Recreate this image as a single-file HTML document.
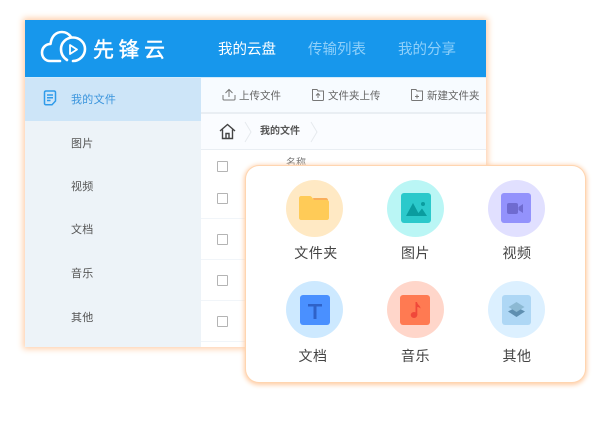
<!DOCTYPE html>
<html lang="zh">
<head>
<meta charset="utf-8">
<style>
html,body{margin:0;padding:0;background:#fff}
body{width:600px;height:434px;position:relative;overflow:hidden;font-family:"Liberation Sans","Noto Sans CJK SC",sans-serif;color:#444}
div,span,svg{position:absolute}
#w{left:0;top:0;width:600px;height:434px;filter:blur(.3px)}
.t{white-space:nowrap;line-height:1}
#p{left:25px;top:20px;width:461px;height:327px;background:#fff;box-shadow:0 0 6px 2px #ffd0ab}
.side{font-size:11px;letter-spacing:.3px;color:#555;left:71px}
.tool{font-size:10.5px;color:#666;top:91px}
.nav{font-size:14.5px;top:43px;color:#8fd0fa}
.cb{left:217px;width:9px;height:9px;border:1px solid #b4b4b4;border-radius:1px;background:#fff}
.ln{left:201px;width:285px;height:1px;background:#f1f5f9}
.c{width:57px;height:57px;border-radius:50%}
.s{width:30px;height:30px;border-radius:3px}
.lb{font-size:14px;letter-spacing:.5px;color:#444;text-align:center;width:60px}
</style>
</head>
<body>
<div id="w">
<div id="p"></div>
<div style="left:25px;top:20px;width:461px;height:57px;background:#1797ec"></div>
<div style="left:25px;top:77px;width:461px;height:1px;background:#d3ebfb"></div>

<svg style="left:40px;top:29px" width="48" height="36" viewBox="0 0 48 36" fill="none" stroke="#fff" stroke-width="2.6" stroke-linecap="round" stroke-linejoin="round">
<path d="M20 32H10C5 32 2 28 2 23.500C2 18.500 6 15 10.500 15C11.500 7 16 3 22 3C26 3 29 5 31 8"/>
<path d="M27 31C22.500 28 21 24 21 20C21 13.500 26.500 8.500 33 8.500C39.500 8.500 45 13.500 45 20C45 26.500 39.500 32 33 32"/>
<path d="M30 16L37 20.500L30 25Z" stroke-width="1.800"/>
</svg>
<span class="t" style="left:93px;top:40px;font-size:21px;letter-spacing:4.500px;color:#fff;-webkit-text-stroke:.4px #fff">先锋云</span>
<span class="t nav" style="left:218px;color:#fff">我的云盘</span>
<span class="t nav" style="left:308px">传输列表</span>
<span class="t nav" style="left:398px">我的分享</span>

<div style="left:25px;top:78px;width:176px;height:269px;background:#edf3f8"></div>
<div style="left:25px;top:78px;width:176px;height:43px;background:#cde5f8"></div>
<svg style="left:43px;top:90px" width="14" height="16" viewBox="0 0 14 16" fill="none" stroke="#2f9bea" stroke-width="1.500">
<path d="M3 1H11C12 1 12.500 1.500 12.500 2.500V11L9 14.800H3C2 14.800 1.500 14 1.500 13.500V2.500C1.500 1.500 2 1 3 1Z"/>
<path d="M4 5H10M4 7.800H10M4 10.500H7.500"/>
</svg>
<span class="t side" style="top:95px;color:#3a94dc">我的文件</span>
<span class="t side" style="top:139px">图片</span>
<span class="t side" style="top:182px">视频</span>
<span class="t side" style="top:225px">文档</span>
<span class="t side" style="top:269px">音乐</span>
<span class="t side" style="top:313px">其他</span>

<div style="left:201px;top:78px;width:285px;height:34px;background:#f7fbff"></div>
<div style="left:201px;top:112px;width:285px;height:2px;background:#e9eef3"></div>
<div style="left:201px;top:114px;width:285px;height:35px;background:#fafcff"></div>
<div style="left:201px;top:149px;width:285px;height:1px;background:#e9eef3"></div>

<svg style="left:222px;top:88px" width="14" height="13" viewBox="0 0 14 13" fill="none" stroke="#777" stroke-width="1">
<path d="M1 7V11C1 11.500 1.500 12 2 12H12C12.500 12 13 11.500 13 11V7"/><path d="M7 9V1.500M3.500 5L7 1.500L10.500 5"/>
</svg>
<span class="t tool" style="left:239px">上传文件</span>
<svg style="left:311px;top:88px" width="14" height="13" viewBox="0 0 14 13" fill="none" stroke="#777" stroke-width="1">
<path d="M1.500 1.500H6L7 3H12.500V11.500C12.500 12 12 12.500 11.500 12.500H2.500C2 12.500 1.500 12 1.500 11.500Z"/><path d="M7 10V6M5 7.500L7 5.500L9 7.500"/>
</svg>
<span class="t tool" style="left:328px">文件夹上传</span>
<svg style="left:410px;top:88px" width="14" height="13" viewBox="0 0 14 13" fill="none" stroke="#777" stroke-width="1">
<path d="M1.500 1.500H6L7 3H12.500V11.500C12.500 12 12 12.500 11.500 12.500H2.500C2 12.500 1.500 12 1.500 11.500Z"/><path d="M7 10.500V6.500M5 8.500H9"/>
</svg>
<span class="t tool" style="left:427px">新建文件夹</span>

<svg style="left:219px;top:123px" width="17" height="17" viewBox="0 0 17 17" fill="none" stroke="#444" stroke-width="1.400">
<path d="M1 8L8.500 1.500L16 8"/><path d="M3.500 6.500V15.500H13.500V6.500"/><path d="M7 15.500V10.500H10V15.500"/>
</svg>
<svg style="left:243px;top:120px" width="10" height="24" viewBox="0 0 10 24" fill="none" stroke="#e6eaee"><path d="M2 2L8 12L2 22"/></svg>
<span class="t" style="left:260px;top:127px;font-size:10px;font-weight:bold;color:#555">我的文件</span>
<svg style="left:309px;top:120px" width="10" height="24" viewBox="0 0 10 24" fill="none" stroke="#e6eaee"><path d="M2 2L8 12L2 22"/></svg>

<div class="cb" style="top:161px"></div>
<div class="cb" style="top:193px"></div>
<div class="cb" style="top:234px"></div>
<div class="cb" style="top:275px"></div>
<div class="cb" style="top:316px"></div>
<div class="ln" style="top:218px"></div>
<div class="ln" style="top:259px"></div>
<div class="ln" style="top:300px"></div>
<div class="ln" style="top:341px"></div>
<span class="t" style="left:286px;top:159px;font-size:10px;color:#777">名称</span>

<div style="left:246px;top:166px;width:339px;height:216px;background:#fff;border-radius:13px;box-shadow:0 0 0 1px #ffd5b0,0 1px 5px 2px #ffcda5"></div>

<div class="c" style="left:286px;top:180px;background:#ffe9c4"></div>
<svg style="left:299px;top:196px" width="30" height="24" viewBox="0 0 30 24">
<path d="M14 2H27C28 2 29 3 29 4V6H15Z" fill="#f9ae5b"/>
<path d="M0 2C0 1 1 0 2 0H11C12.500 0 14 3 15 4H28C29 4 30 5 30 6V22C30 23 29 24 28 24H2C1 24 0 23 0 22Z" fill="#ffcb57"/>
</svg>
<span class="t lb" style="left:286px;top:246px">文件夹</span>

<div class="c" style="left:387px;top:180px;background:#baf6f5"></div>
<div class="s" style="left:401px;top:193px;background:#2bc9cb"></div>
<svg style="left:401px;top:193px" width="30" height="30" viewBox="0 0 30 30">
<circle cx="22" cy="11" r="2" fill="#0a9c9f"/><path d="M5 23L12 10L19 23Z" fill="#0a9c9f"/><path d="M15 23L21 15.500L26 23Z" fill="#0a9c9f"/>
</svg>
<span class="t lb" style="left:385.500px;top:246px">图片</span>

<div class="c" style="left:488px;top:180px;background:#e1e0ff"></div>
<div class="s" style="left:501px;top:193px;background:#9392fc"></div>
<svg style="left:501px;top:193px" width="30" height="30" viewBox="0 0 30 30">
<rect x="6" y="10" width="11" height="11" rx="2" fill="#6f6bd0"/><path d="M17.500 14L22 11V20L17.500 17Z" fill="#6f6bd0"/>
</svg>
<span class="t lb" style="left:487px;top:246px">视频</span>

<div class="c" style="left:286px;top:281px;background:#cde9ff"></div>
<div class="s" style="left:300px;top:295px;background:#4a90ff"></div>
<svg style="left:300px;top:295px" width="30" height="30" viewBox="0 0 30 30">
<path d="M8 9H22V11.500H16.500V24H13.500V11.500H8Z" fill="#2f62c8"/>
</svg>
<span class="t lb" style="left:283px;top:349px">文档</span>

<div class="c" style="left:387px;top:281px;background:#ffd6ca"></div>
<div class="s" style="left:400px;top:295px;background:#ff7a52"></div>
<svg style="left:400px;top:295px" width="30" height="30" viewBox="0 0 30 30">
<ellipse cx="14" cy="20" rx="3.300" ry="3" fill="#f0483a"/><path d="M15.500 20V7L17 7C17.500 10 20.500 10.500 20.500 13.500C19.500 12.500 18.500 12 17.300 12V20Z" fill="#f0483a"/>
</svg>
<span class="t lb" style="left:385.500px;top:349px">音乐</span>

<div class="c" style="left:488px;top:281px;background:#dcf0ff"></div>
<div class="s" style="left:502px;top:295px;width:29px;background:#aed7f5"></div>
<svg style="left:502px;top:295px" width="30" height="30" viewBox="0 0 30 30">
<path d="M6 16.500L14.500 12L23 16.500L14.500 22Z" fill="#5f8fb0"/><path d="M6.500 12L14.500 7L22.500 12L14.500 17Z" fill="#8cb9d3"/>
</svg>
<span class="t lb" style="left:487px;top:349px">其他</span>
</div>
</body>
</html>
